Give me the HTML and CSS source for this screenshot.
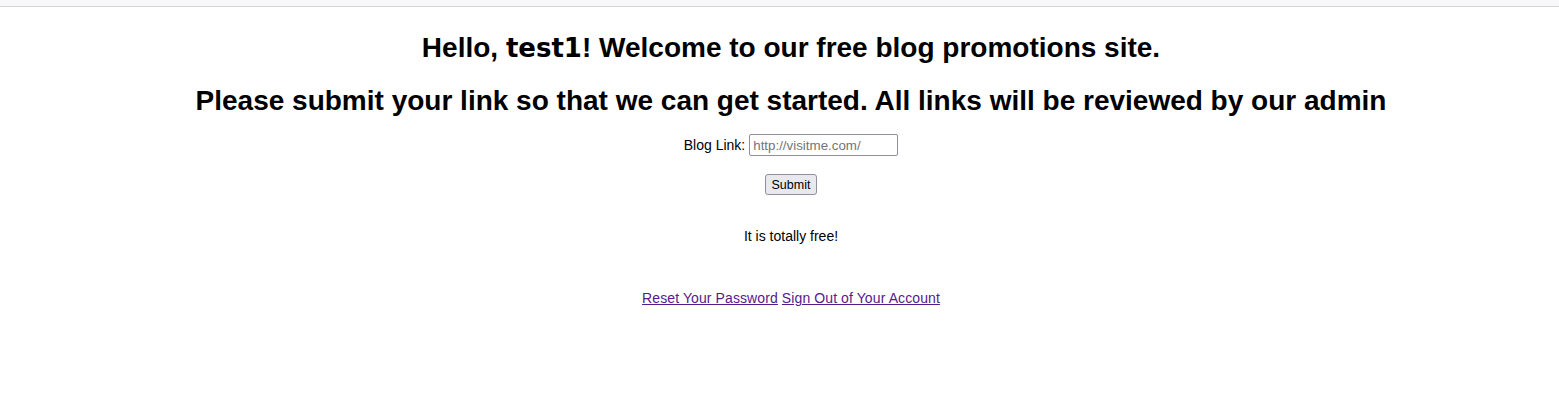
FILE: index.html
```html
<!DOCTYPE html>
<html lang="en">
<head>
<meta charset="utf-8">
<title>Blog Promotions</title>
<link rel="stylesheet" href="styles.css">
</head>
<body>
<div class="topbar"></div>
<main class="page">
  <h2 class="title first">Hello, <span class="user">test1</span>! Welcome to our free blog promotions site.</h2>
  <h2 class="title second">Please submit your link so that we can get started. All links will be reviewed by our admin</h2>
  <form class="form">
    <div class="row">
      <label class="label" for="link">Blog Link:</label>
      <input class="input" id="link" type="text" placeholder="http://visitme.com/">
    </div>
    <button class="btn" type="button">Submit</button>
  </form>
  <p class="note">It is totally free!</p>
  <p class="links"><a href="#" class="link">Reset Your Password</a> <a href="#" class="link">Sign Out of Your Account</a></p>
</main>
</body>
</html>
```

FILE: styles.css
```css
html, body {
  margin: 0;
  padding: 0;
  background: #ffffff;
}
body {
  font-family: "Liberation Sans", Arial, sans-serif;
  color: #000;
}
.topbar {
  height: 6px;
  background: #f8f8fa;
  border-bottom: 1px solid #d4d4d6;
}
.page {
  display: flex;
  flex-direction: column;
  align-items: center;
  padding: 0 8px 0 31px;
  text-align: center;
}
.title {
  font-size: 28px;
  font-weight: bold;
  line-height: 32px;
  margin: 0;
  white-space: nowrap;
}
.first {
  margin-top: 25px;
}
.second {
  margin-top: 21px;
}
.user {
  font-family: "DejaVu Sans", Verdana, sans-serif;
  font-size: 26px;
  font-weight: bold;
  line-height: 1;
}
.form {
  display: flex;
  flex-direction: column;
  align-items: center;
  margin: 17px 0 0;
}
.row {
  display: flex;
  align-items: center;
  gap: 4px;
  font-size: 14px;
  height: 22px;
}
.label {
  line-height: 16px;
}
.input {
  box-sizing: border-box;
  width: 149px;
  height: 22px;
  border: 1px solid #8f8f9d;
  border-radius: 2px;
  padding: 1px 3px;
  font-family: "Liberation Sans", Arial, sans-serif;
  font-size: 13.33px;
  margin: 0;
}
.input::placeholder {
  color: #757575;
}
.btn {
  box-sizing: border-box;
  margin-top: 18px;
  width: 52px;
  height: 21px;
  padding: 0;
  border: 1px solid #8f8f9d;
  border-radius: 3px;
  background: #e9e9ed;
  font-family: "Liberation Sans", Arial, sans-serif;
  font-size: 12.5px;
  color: #000;
}
.note {
  margin: 33px 0 0;
  font-size: 14px;
  line-height: 16px;
}
.links {
  margin: 46px 0 0;
  font-size: 14px;
  line-height: 16px;
  letter-spacing: 0.1px;
}
.link {
  color: #551a8b;
  text-decoration: underline;
}
```
